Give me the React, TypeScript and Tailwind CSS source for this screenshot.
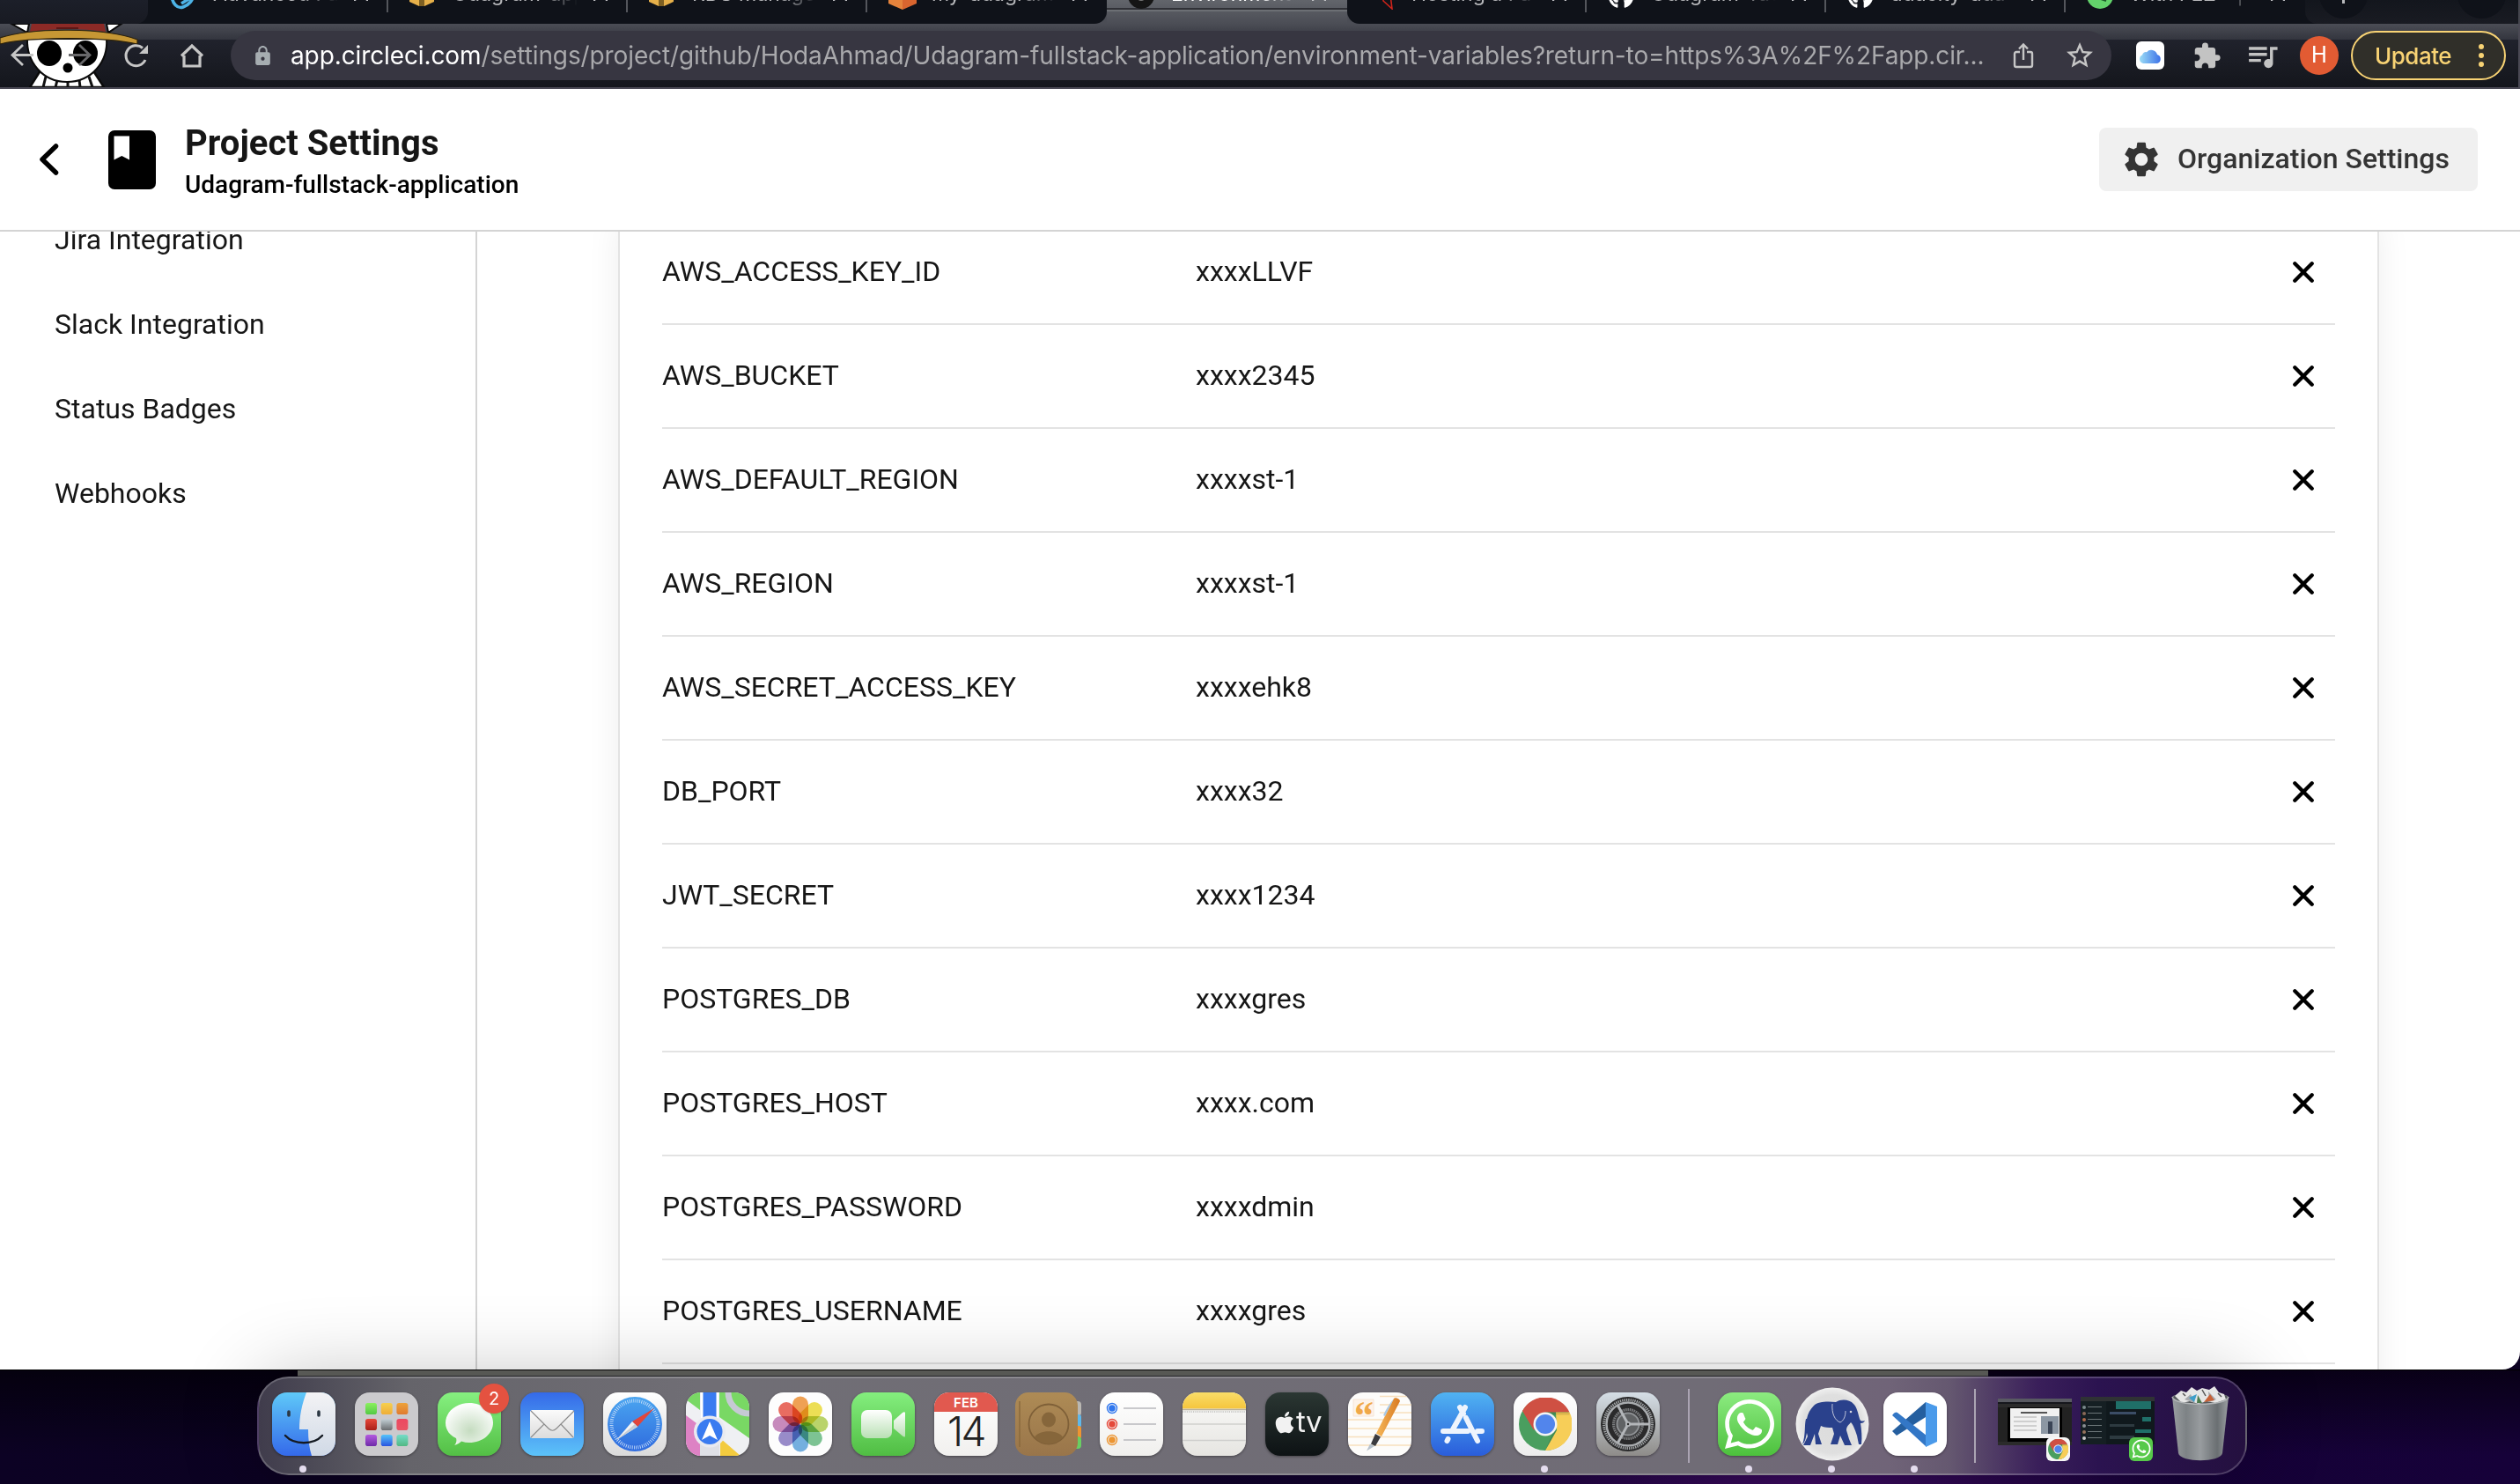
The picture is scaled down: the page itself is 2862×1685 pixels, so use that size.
import React from "react";
import { MdExtension, MdLock, MdQueueMusic, MdSettings, MdStarBorder } from "react-icons/md";
import { FaApple, FaGithub, FaWhatsapp } from "react-icons/fa";

const variables = [
  ["AWS_ACCESS_KEY_ID", "xxxxLLVF"],
  ["AWS_BUCKET", "xxxx2345"],
  ["AWS_DEFAULT_REGION", "xxxxst-1"],
  ["AWS_REGION", "xxxxst-1"],
  ["AWS_SECRET_ACCESS_KEY", "xxxxehk8"],
  ["DB_PORT", "xxxx32"],
  ["JWT_SECRET", "xxxx1234"],
  ["POSTGRES_DB", "xxxxgres"],
  ["POSTGRES_HOST", "xxxx.com"],
  ["POSTGRES_PASSWORD", "xxxxdmin"],
  ["POSTGRES_USERNAME", "xxxxgres"],
];

const Cube = ({ left, right, mid }: { left: string; right: string; mid: string }) => (
  <svg viewBox="0 0 28 28" className="size-7">
    <path d="M0 3h11v25L0 23z" fill={left} />
    <path d="M28 3H17v25l11-5z" fill={right} />
    <path d="M11 0h6v28h-6z" fill={mid} />
  </svg>
);

const tabs: { label: string; icon: React.ReactNode; active?: boolean }[] = [
  {
    label: "Advanced Fu",
    icon: (
      <svg viewBox="0 0 28 32" className="mt-1 h-8 w-7" fill="none" stroke="#4db3e6" strokeWidth="3.600">
        <path d="M2 14c0 12 7 17 13 15 6-2 12-8 12-16M13 25l13-8" />
      </svg>
    ),
  },
  { label: "Udagram-app", icon: <Cube left="#e6b04a" right="#e6b04a" mid="#7d5f22" /> },
  { label: "RDS Manage", icon: <Cube left="#e6b04a" right="#e6b04a" mid="#7d5f22" /> },
  {
    label: "my-udagram",
    icon: (
      <svg viewBox="0 0 32 32" className="mt-1 h-8 w-8">
        <path d="M0 6 16 0v32L0 25z" fill="#e5833c" />
        <path d="M32 6 16 0v32l16-7z" fill="#d9652f" />
      </svg>
    ),
  },
  {
    label: "Environment",
    active: true,
    icon: (
      <svg viewBox="0 0 30 30" className="mt-1 size-[30px]">
        <circle cx="15" cy="15" r="15" fill="#151515" />
        <circle cx="15" cy="15" r="6" fill="#777" />
      </svg>
    ),
  },
  {
    label: "Hosting a Fu",
    icon: (
      <svg viewBox="0 0 28 32" className="mt-1 h-8 w-7" fill="none" stroke="#d0241b" strokeWidth="1.600">
        <path d="M16 0 17 22l10 9-2-16" />
      </svg>
    ),
  },
  { label: "Udagram-Tac", icon: <FaGithub className="mt-1 size-[30px] text-white" /> },
  { label: "udacity-uda", icon: <FaGithub className="mt-1 size-[30px] text-white" /> },
  {
    label: "With FEZ - |",
    icon: (
      <svg viewBox="0 0 30 30" className="mt-1 size-[30px]">
        <circle cx="15" cy="15" r="15" fill="#63d36b" />
        <path d="m16 19 6 2" stroke="#1d5b2b" strokeWidth="2" />
      </svg>
    ),
  },
];

function TabStrip() {
  return (
    <div className="flex h-[27px] shrink-0 overflow-hidden bg-gradient-to-b from-[#5e6167] to-[#4b4d55]">
      <div className="flex flex-1 overflow-hidden bg-[#0f1219]">
        <div className="mr-px h-full w-[168px] shrink-0 rounded-br-[14px] bg-gradient-to-b from-[#1c1f29] to-[#181a22]" />
        {tabs.map((t, i) => (
          <div
            key={t.label}
            className={
              t.active
                ? "relative h-[27px] w-[273px] shrink-0 bg-gradient-to-b from-[#62656b] to-[#4b4d55]"
                : "relative h-[27px] w-[272px] shrink-0"
            }
          >
            {t.active && <div className="absolute inset-x-0 top-[9px] h-[2px] bg-[#303137]" />}
            {t.active && <div className="absolute inset-x-0 top-[11px] h-[2px] bg-[#6c6f74]" />}
            {t.active && (
              <>
                <div className="absolute bottom-0 -left-4 h-[27px] w-4 overflow-hidden bg-[#4b4d55]">
                  <div className="h-full w-full rounded-br-[14px] bg-[#0f1219]" />
                </div>
                <div className="absolute -right-4 bottom-0 z-10 h-[27px] w-4 overflow-hidden bg-[#4b4d55]">
                  <div className="h-full w-full rounded-bl-[14px] bg-[#0f1219]" />
                </div>
              </>
            )}
            <div className="relative -mt-[21px] flex h-7 items-center pl-6">
              <div className="flex w-[49px] shrink-0 items-center">{t.icon}</div>
              <div
                className={
                  t.active
                    ? "w-[142px] overflow-hidden whitespace-nowrap font-['Inter'] text-[23px] leading-7 text-white [mask-image:linear-gradient(to_right,black_70%,transparent)]"
                    : "w-[142px] overflow-hidden whitespace-nowrap font-['Inter'] text-[23px] leading-7 text-[#b8b9bc] [mask-image:linear-gradient(to_right,black_70%,transparent)]"
                }
              >
                {t.label}
              </div>
              <svg viewBox="0 0 16 16" className="ml-[18px] size-4" stroke="#c4c5c8" strokeWidth="2.400">
                <path d="m0 0 16 16M16 0 0 16" />
              </svg>
            </div>
            {!t.active && i !== 3 && i !== 8 && <div className="absolute top-0 right-0 h-[14px] w-[2px] bg-[#54565c]" />}
          </div>
        ))}
        <div className="flex flex-1 justify-between rounded-bl-[14px] bg-gradient-to-b from-[#13161d] to-[#191b22] pr-[14px] pl-4">
          <div className="-mt-[34px] flex size-[55px] items-end justify-center rounded-full bg-[#0f1219] pb-[17px]">
            <div className="h-5 w-[3px] bg-[#b8b9bc]" />
          </div>
          <div className="-mt-[34px] size-[55px] rounded-full bg-[#0f1219]" />
        </div>
      </div>
      <div className="w-[2px] bg-[#45464e]" />
    </div>
  );
}

function PirateSkull() {
  return (
    <svg viewBox="0 27 160 72" className="absolute top-0 left-0 h-[72px] w-[160px]">
      <path d="M13 27h20l-2 10zM121 27h17l-15 10z" fill="#fff" stroke="#0a0a0a" strokeWidth="2" />
      <path d="m46 80-12 19h84l-13-20z" fill="#fff" stroke="#0a0a0a" strokeWidth="2.500" />
      <path d="m52 87-3 12m16-8-2 8m14-8v8m13-8 1 8m10-12 4 12" stroke="#111" strokeWidth="3" />
      <path d="M31 44c-1 26 17 49 45 49s47-23 45-49z" fill="#fff" stroke="#0a0a0a" strokeWidth="2" />
      <ellipse cx="56" cy="60.500" rx="14" ry="14.500" fill="#000" />
      <ellipse cx="97" cy="60.500" rx="14" ry="14.500" fill="#000" />
      <circle cx="77" cy="77" r="5.500" fill="#000" />
      <path d="M36 27h82l2 9c-28-4-56-4-86 0z" fill="#8c2a26" />
      <path d="M64 32h25" stroke="#5c1715" strokeWidth="2" />
      <path d="M20 45c30-5 84-5 114 0" stroke="#15110a" strokeWidth="3" fill="none" />
      <path d="M0 43C36 31 120 31 156 45v5C120 42 40 41 0 50z" fill="#c69734" stroke="#2c220c" strokeWidth="1.200" />
    </svg>
  );
}

function Toolbar() {
  return (
    <div className="relative flex h-[74px] shrink-0 items-center border-r-2 border-b-2 border-[#4a4954] bg-[linear-gradient(to_bottom,#4b4d55_0px,#33353e_18px,#20222c_18px,#14161c_72px)]">
      <PirateSkull />
      <svg viewBox="0 0 262 72" className="relative h-[72px] w-[262px] shrink-0" fill="none" stroke="#c6c6c6" strokeWidth="2.800">
        <path d="M38 35.500H14M26 24 14 35.500 26 47" />
        <path d="M78 35.500h24M90 24l12 11.500L90 47" stroke="#68686a" />
        <path d="M165 41a11.500 11.500 0 1 1-3-13.500" strokeWidth="3" />
        <path d="m168 24v10h-10z" fill="#c6c6c6" stroke="none" />
        <path d="M209 36v12h18V36" strokeWidth="3.200" />
        <path d="M206 36.500 218 25l12 11.500" strokeWidth="3.200" />
      </svg>
      <div className="flex h-14 w-[2136px] shrink-0 items-center rounded-full bg-[#373641] pl-[24px]">
        <MdLock className="mr-[19px] size-[25px] shrink-0 text-[#a6adb1]" />
        <div className="w-[1934px] shrink-0 whitespace-nowrap font-['Inter'] text-[28px] tracking-[-0.110px] text-[#a9a9ac]">
          <span className="text-white">app.circleci.com</span>
          /settings/project/github/HodaAhmad/Udagram-fullstack-application/environment-variables?return-to=https%3A%2F%2Fapp.cir...
        </div>
        <svg viewBox="0 0 24 30" className="ml-[22px] h-[30px] w-6 shrink-0" fill="none" stroke="#c6c6c6" strokeWidth="2.400">
          <path d="M8 11H4a2 2 0 0 0-2 2v13a2 2 0 0 0 2 2h16a2 2 0 0 0 2-2V13a2 2 0 0 0-2-2h-4M12 20V2.500M7 7.500l5-5 5 5" />
        </svg>
        <MdStarBorder className="ml-[34px] size-[36px] shrink-0 text-[#c6c6c6]" />
      </div>
      <div className="ml-[28px] flex size-8 items-center justify-center rounded-[6px] bg-white">
        <svg viewBox="0 0 26 17" className="h-[17px] w-[26px]">
          <defs>
            <linearGradient id="cloud">
              <stop offset="0" stopColor="#9bdcf6" />
              <stop offset="1" stopColor="#3d72e8" />
            </linearGradient>
          </defs>
          <path d="M5 17a5 5 0 0 1-1-9.500 4 4 0 0 1 5-3.300A7 7 0 0 1 21 7a5.200 5.200 0 0 1 0 10z" fill="url(#cloud)" />
        </svg>
      </div>
      <MdExtension className="ml-[32px] size-[33px] text-[#c3c3c3]" />
      <MdQueueMusic className="ml-[26px] size-[41px] text-[#c3c3c3]" />
      <div className="ml-[22px] flex size-11 items-center justify-center rounded-full bg-[#e25b33] font-['Roboto'] text-[25px] text-white">H</div>
      <div className="ml-[14px] flex h-14 w-[176px] items-center rounded-full border-2 border-[#f8d374] bg-[#302f29] pl-[25px] font-['Inter'] text-[26px] font-medium tracking-[-0.500px] text-[#f8d374]">
        <span className="w-[110px]">Update</span>
        <div className="ml-[8px] flex flex-col gap-1">
          <i className="size-[6px] rounded-full bg-[#f8d374]" />
          <i className="size-[6px] rounded-full bg-[#f8d374]" />
          <i className="size-[6px] rounded-full bg-[#f8d374]" />
        </div>
      </div>
    </div>
  );
}

function Header() {
  return (
    <div className="flex h-[162px] shrink-0 items-center border-b-2 border-[#d4d4d4] bg-white pr-[48px] pl-[44px]">
      <svg viewBox="0 0 23 36" className="h-9 w-[23px]" fill="none" stroke="#000" strokeWidth="5.500" strokeLinecap="round" strokeLinejoin="round">
        <path d="M19.500 3 4 18l15.500 15" />
      </svg>
      <svg viewBox="0 0 54 67" className="ml-[56px] h-[67px] w-[54px]">
        <rect width="54" height="67" rx="7" />
        <path d="M6.500 6.500H24v27L15.300 29 6.500 33.500z" fill="#fff" />
      </svg>
      <div className="ml-[33px] flex flex-col pt-[6px]">
        <div className="text-[40px] leading-[48px] font-bold text-[#161616]">Project Settings</div>
        <div className="mt-[3px] text-[28px] leading-[40px] font-medium text-black">Udagram-fullstack-application</div>
      </div>
      <div className="ml-auto flex h-[72px] w-[430px] items-center rounded-lg bg-[#f0f0f0] pl-6 text-[32px] font-medium text-[#343434]">
        <MdSettings className="mr-[17px] size-12" />
        <span className="-mt-[2px]">Organization Settings</span>
      </div>
    </div>
  );
}

function Content() {
  return (
    <div className="flex h-[1292px] shrink-0 overflow-hidden rounded-br-[20px] bg-white text-[32px] text-[#161616]">
      <div className="w-[542px] shrink-0 border-r-2 border-[#d4d4d4] pl-[62px]">
        <div className="-mt-[39px] flex flex-col">
          {["Jira Integration", "Slack Integration", "Status Badges", "Webhooks"].map((l) => (
            <div key={l} className="flex h-24 items-center">
              {l}
            </div>
          ))}
        </div>
      </div>
      <div className="-mt-[12px] ml-[160px] h-[1400px] w-[2000px] border-x-2 border-[#e3e3e3] px-12 shadow-[0_0_36px_rgba(0,0,0,0.07)]">
        {variables.map(([name, value]) => (
          <div key={name} className="flex h-[118px] items-center border-b-2 border-[#e3e3e3]">
            <div className="w-[606px] pb-[2px]">{name}</div>
            <div className="flex-1 pb-[2px]">{value}</div>
            <svg viewBox="0 0 24 24" className="mr-6 size-6" stroke="#000" strokeWidth="4.300" strokeLinecap="round">
              <path d="m2.300 2.300 19.400 19.400M21.700 2.300 2.300 21.700" />
            </svg>
          </div>
        ))}
      </div>
    </div>
  );
}

const Grad = ({ id, from, to }: { id: string; from: string; to: string }) => (
  <linearGradient id={id} x1="0" y1="0" x2="0" y2="1">
    <stop offset="0" stopColor={from} />
    <stop offset="1" stopColor={to} />
  </linearGradient>
);

const ChromeMark = ({ className }: { className: string }) => (
  <svg viewBox="-30 -30 60 60" className={className}>
    <circle r="30" fill="#4a9e5f" />
    <path d="M-26 -15A30 30 0 0 1 27.500 -13.500H0L-13 7z" fill="#cf5043" />
    <path d="M27.500 -13.500A30 30 0 0 1 0 30L13 7 12 -13.500z" fill="#f7ce58" />
    <path d="M0-13.500h27.500v3H4zM0 30 13 7l-3-1z" fill="#000" opacity=".12" />
    <circle r="13.500" fill="#f4f4f4" />
    <circle r="11" fill="#5285ec" />
  </svg>
);

const Finder = () => (
  <svg viewBox="0 0 72 72">
    <defs>
      <Grad id="fa" from="#5fc9f8" to="#3469ea" />
      <Grad id="fb" from="#f3f3f5" to="#d0d9e6" />
    </defs>
    <rect width="72" height="72" fill="url(#fa)" />
    <path d="M39 0c-5 13-8 27-8 42h10c0 11 1 21 4 30h27V0z" fill="url(#fb)" />
    <path d="M19 22v4M53 22v4" stroke="#2c3844" strokeWidth="3.600" strokeLinecap="round" />
    <path d="M15 49c10 11 32 11 42 0" stroke="#151a22" strokeWidth="2.400" strokeLinecap="round" fill="none" />
  </svg>
);

const launchColors = [
  ["#8bf05e", "#54c945"],
  ["#f6cf4f", "#efae38"],
  ["#eda23a", "#e07b30"],
  ["#e8483a", "#a81f18"],
  ["#c4d0d6", "#6a6d70"],
  ["#ec4861", "#e95565"],
  ["#b45be0", "#6f2ba8"],
  ["#54c4fa", "#2a54e0"],
  ["#74dcc8", "#52b883"],
];
const Launchpad = () => (
  <svg viewBox="0 0 72 72">
    <rect width="72" height="72" fill="#cbcacd" />
    {launchColors.map(([a, b], i) => (
      <g key={a}>
        <defs>
          <Grad id={`lp${i}`} from={a} to={b} />
        </defs>
        <rect x={12 + (i % 3) * 17.7} y={12 + Math.floor(i / 3) * 18} width="13" height="13" rx="2.800" fill={`url(#lp${i})`} />
      </g>
    ))}
  </svg>
);

const Messages = () => (
  <svg viewBox="0 0 72 72">
    <defs>
      <Grad id="ma" from="#86f080" to="#53bf45" />
      <radialGradient id="mb" cx=".52" cy=".65" r=".6">
        <stop offset="0" stopColor="#c5dcc0" />
        <stop offset="1" stopColor="#fbfdfb" />
      </radialGradient>
    </defs>
    <rect width="72" height="72" fill="url(#ma)" />
    <path d="M36 12c15 0 27 10 27 22.500S51 57 36 57c-3 0-6-.5-9-1.500-2 2-5 4-8 4.500 2-2 3-5 2-8C13 48 9 42 9 34.500 9 22 21 12 36 12z" fill="url(#mb)" />
  </svg>
);

const Mail = () => (
  <svg viewBox="0 0 72 72">
    <defs>
      <Grad id="mc" from="#356ae8" to="#5cc3f9" />
      <Grad id="md" from="#fbfbfb" to="#dcdcdc" />
    </defs>
    <rect width="72" height="72" fill="url(#mc)" />
    <rect x="11" y="20" width="50" height="32" rx="2.500" fill="url(#md)" />
    <path d="m12 21 20 20c3 3 6 3 9 0l20-20M12 51l15-15M60 51 46 36" stroke="#8b8b8b" strokeWidth="1.100" fill="none" />
  </svg>
);

const Safari = () => (
  <svg viewBox="0 0 72 72">
    <defs>
      <Grad id="sa" from="#ffffff" to="#dadada" />
      <Grad id="sb" from="#4aa5f0" to="#2f6bde" />
    </defs>
    <rect width="72" height="72" fill="url(#sa)" />
    <circle cx="36" cy="36" r="31" fill="url(#sb)" />
    <circle cx="36" cy="36" r="26.500" fill="none" stroke="#cfe3fa" strokeWidth="4" strokeDasharray="0.8 1.510" />
    <path d="M58 18 39 39l-6-6z" fill="#e0463c" />
    <path d="m15 54 18-21 6 6z" fill="#f2f2f2" />
    <path d="m15 54 24-15-3-3z" fill="#c6ccd4" />
  </svg>
);

const Maps = () => (
  <svg viewBox="0 0 72 72">
    <rect width="72" height="72" fill="#eff0f3" />
    <path d="M0 0h16v20L0 8zM38 0h34v52L38 28z" fill="#79d864" />
    <path d="M0 26 16 38v34H0z" fill="#dd82c4" />
    <path d="M39 52 62 72H39z" fill="#f3cb3f" />
    <path d="M16 40h22v32H16z" fill="#dfe0e6" />
    <path d="M17 0h20v34H17z" fill="#fff" />
    <path d="M19.500 0h15v34h-15z" fill="#3a7bf0" />
    <circle cx="72" cy="0" r="24" fill="none" stroke="#c6c9d4" strokeWidth="7" />
    <circle cx="27" cy="44.500" r="18" fill="#e9eaf0" />
    <circle cx="27" cy="44.500" r="14.500" fill="#3a7bf0" />
    <path d="m27 33 9 21-9-5-9 5z" fill="#fff" />
  </svg>
);

const petals = ["#f0953c", "#ecdc3d", "#b2cf56", "#6cbd85", "#62a6dd", "#8b7cc4", "#c27bb5", "#e8594c"];
const Photos = () => (
  <svg viewBox="0 0 72 72">
    <rect width="72" height="72" fill="#fdfdfd" />
    {petals.map((c, i) => (
      <rect key={c} x="27" y="4.500" width="18" height="31" rx="9" fill={c} opacity=".88" transform={`rotate(${i * 45} 36 36)`} className="mix-blend-multiply" />
    ))}
  </svg>
);

const FaceTime = () => (
  <svg viewBox="0 0 72 72">
    <defs>
      <Grad id="fc" from="#84ee7e" to="#50bd43" />
      <Grad id="fd" from="#ffffff" to="#b9e0b4" />
    </defs>
    <rect width="72" height="72" fill="url(#fc)" />
    <rect x="11" y="20" width="35" height="32" rx="7" fill="url(#fd)" />
    <path d="M48 32 58 23c2-1.500 3-1 3 1v25c0 2-1 2-3 .5L48 41z" fill="url(#fd)" />
  </svg>
);

const Calendar = () => (
  <div className="flex size-full flex-col items-center bg-gradient-to-b from-white to-[#f1f0ee]">
    <div className="flex h-[22px] w-full shrink-0 items-center justify-center bg-[#e1594f] pt-[2px] font-['Inter'] text-[15px] leading-none font-semibold text-white [text-shadow:none]">FEB</div>
    <div className="-mt-px font-['Inter'] text-[46px] leading-[46px] font-light tracking-[-2.500px] text-[#222]">14</div>
  </div>
);

const Contacts = () => (
  <svg viewBox="0 0 76 72" className="h-[72px] w-[76px]">
    <defs>
      <Grad id="ca" from="#ae8b55" to="#99754a" />
    </defs>
    <rect x="62" y="10" width="13" height="17" rx="4" fill="#b9b7b2" />
    <rect x="62" y="25" width="13" height="15" rx="3" fill="#5fb8ea" />
    <rect x="62" y="38" width="13" height="15" rx="3" fill="#ee9431" />
    <rect x="62" y="50" width="13" height="14" rx="4" fill="#69cf62" />
    <rect x="0" y="0" width="71" height="72" rx="15" fill="url(#ca)" />
    <path d="M5 10v52" stroke="#8a6a3d" strokeWidth="1.500" />
    <circle cx="38" cy="36" r="22.500" fill="none" stroke="#7f6038" strokeWidth="1.800" />
    <ellipse cx="38" cy="31" rx="8" ry="8.500" fill="#86663b" />
    <path d="M22 51c4-9 28-9 32 0-8 10-24 10-32 0z" fill="#86663b" />
  </svg>
);

const Reminders = () => (
  <svg viewBox="0 0 72 72">
    <defs>
      <Grad id="ra" from="#ffffff" to="#f0efed" />
    </defs>
    <rect width="72" height="72" fill="url(#ra)" />
    {["#2f76ee", "#e5493a", "#ec9532"].map((c, i) => (
      <g key={c}>
        <circle cx="14" cy={18 + i * 18} r="5.500" fill="none" stroke={c} strokeWidth="1.400" />
        <circle cx="14" cy={18 + i * 18} r="3.800" fill={c} />
        <path d={`M27 ${18 + i * 18}h37`} stroke="#b9b9bd" strokeWidth="1.700" />
      </g>
    ))}
  </svg>
);

const Notes = () => (
  <svg viewBox="0 0 72 72">
    <defs>
      <Grad id="na" from="#f9dd68" to="#f5c53d" />
      <Grad id="nb" from="#fbfbfa" to="#e6e5e1" />
    </defs>
    <rect width="72" height="72" fill="url(#nb)" />
    <rect width="72" height="18.500" fill="url(#na)" />
    <path d="M0 19.500h72" stroke="#b9b19b" strokeWidth="1.500" />
    <path d="M0 22h72" stroke="#bdbdbb" strokeWidth="1.500" strokeDasharray="1.200 1.200" />
    <path d="M0 36h72M0 54.500h72" stroke="#cfcfcd" strokeWidth="1.400" />
  </svg>
);

const AppleTv = () => (
  <div className="flex size-full items-center justify-center bg-gradient-to-b from-[#2b3733] to-[#0d1214] font-['Inter'] text-[33px] text-[#f2f2f2]">
    <FaApple className="-mt-1 -mr-px size-[28px]" />
    <span className="-mt-1 tracking-[-0.500px]">tv</span>
  </div>
);

const Pages = () => (
  <svg viewBox="0 0 72 72">
    <defs>
      <linearGradient id="pa">
        <stop offset="0" stopColor="#f6b85a" />
        <stop offset="1" stopColor="#d87a22" />
      </linearGradient>
    </defs>
    <rect width="72" height="72" fill="#fdfcfa" />
    <path d="M36 4.500h36M36 14h36M36 23h36M0 31h72M0 41h72M0 50.500h72M0 60h72" stroke="#f8dfbd" strokeWidth="1.300" />
    <path d="M6 8h23v19H6z" fill="#fdf3ea" stroke="#f4e0cf" strokeWidth=".8" />
    <text x="7" y="42" fontFamily="Liberation Serif" fontWeight="bold" fontSize="46" textLength="22" lengthAdjust="spacingAndGlyphs" fill="#f0a848">“</text>
    <path d="M52 7c1-2 7 0 7 3L38 50l-6-3.500z" fill="url(#pa)" />
    <path d="m52 7c-5 6-9 12-12 19l2 1z" fill="#a8c8e4" />
    <path d="m31 47 6 3.500L31 61l-5-2.500z" fill="#3b3b3f" />
    <path d="m25 58.500 5 2.500-9 5.500z" fill="#b7c2cc" />
  </svg>
);

const AppStore = () => (
  <svg viewBox="0 0 72 72">
    <defs>
      <Grad id="aa" from="#50b3f2" to="#2a5ddb" />
    </defs>
    <rect width="72" height="72" fill="url(#aa)" />
    <g stroke="#eef4fd" strokeWidth="6" strokeLinecap="round">
      <path d="M39 17 25 42M14 44h28M53 44h5M18.500 55l1-2M33 17l4 7M40 29l13 26" />
    </g>
  </svg>
);

const ChromeApp = () => (
  <div className="flex size-full items-center justify-center bg-gradient-to-b from-white to-[#ececec]">
    <ChromeMark className="size-[60px]" />
  </div>
);

const Prefs = () => (
  <svg viewBox="0 0 72 72">
    <defs>
      <Grad id="ya" from="#d5dee6" to="#8e8c89" />
    </defs>
    <rect width="72" height="72" fill="url(#ya)" />
    <circle cx="36" cy="36" r="31" fill="#2a2a2b" />
    <circle cx="36" cy="36" r="27.500" fill="none" stroke="#a0a3a5" strokeWidth="3" strokeDasharray="1.400 1" />
    <circle cx="36" cy="36" r="24.500" fill="none" stroke="#a9acaf" strokeWidth="2.500" />
    <circle cx="36" cy="36" r="18" fill="#3a3a3c" />
    <circle cx="36" cy="36" r="16.500" fill="none" stroke="#7d7f81" strokeWidth="3" strokeDasharray="1.400 1" />
    <circle cx="36" cy="36" r="12.500" fill="#606264" stroke="#8d9093" strokeWidth="2" />
    <path d="M36 36h24M36 36 24.500 15M36 36 24.500 57" stroke="#b3b6b9" strokeWidth="3" />
    <circle cx="36" cy="36" r="3" fill="#b3b6b9" />
    <circle cx="36" cy="36" r="1.200" fill="#333" />
  </svg>
);

const WhatsAppIcon = () => (
  <div className="flex size-full items-center justify-center bg-gradient-to-b from-[#8ceb80] to-[#4cc13c]">
    <FaWhatsapp className="size-[64px] text-white" />
  </div>
);

const VsCode = () => (
  <svg viewBox="0 0 72 72">
    <rect width="72" height="72" fill="#fff" />
    <path d="M10 44 48 11v17L15 49z" fill="#255f9f" />
    <path d="M10 26q3-5 6-3l33 26v13z" fill="#3377c6" />
    <path d="M48 11 61 16v40l-13 6z" fill="#4a9aea" />
  </svg>
);

const Elephant = () => (
  <svg viewBox="0 0 84 84" className="size-[84px]">
    <defs>
      <radialGradient id="ea">
        <stop offset="0" stopColor="#dcdcdc" />
        <stop offset=".8" stopColor="#dfdfdf" />
        <stop offset="1" stopColor="#f0f0f0" />
      </radialGradient>
    </defs>
    <circle cx="42" cy="42" r="41.500" fill="url(#ea)" />
    <path
      d="M12 36C10 44 12 54 8 65c3-2 4-8 5-13l1 4-5 10h8l5-13 1 12h7l-4-12 3-9c4 2 9 2 13 2l2 7-4 12h8l3-10 5 11h8l-3-7-3-10c0-5 3-6 5-9 3 3 5 9 7 15l2 10h3c1-8 0-17-1-24 3 0 4-1 5-3-3 1-5 1-6-2-2-7-3-13-7-17-4-5-14-6-20-2-9-1-20-1-25 4-4 4-7 9-8 15z"
      fill="#2a418c"
    />
    <path d="M42 19c-1 11 3 19 9 21 4-2 6-7 6-13" fill="none" stroke="#d0d4e2" strokeWidth=".9" />
    <circle cx="63" cy="28" r="1.300" fill="#d8d8e0" />
  </svg>
);

const Trash = () => (
  <svg viewBox="0 0 66 86" className="h-[86px] w-[66px]">
    <defs>
      <linearGradient id="ta">
        <stop offset="0" stopColor="#9a9ea1" />
        <stop offset=".25" stopColor="#7d8285" />
        <stop offset=".5" stopColor="#989c9f" />
        <stop offset=".8" stopColor="#6a6f72" />
        <stop offset="1" stopColor="#9ca0a3" />
      </linearGradient>
    </defs>
    <path d="M1 12c12-8 52-8 64 0l-7 64c-2 11-48 11-50 0z" fill="url(#ta)" />
    <ellipse cx="33" cy="13" rx="31" ry="7" fill="#565a5d" />
    <path d="m4 11 7-6 6 2 6-6 6 4 6-3 8 2 6-4 5 7 6 2 2 6-12 4-10-2-9 3-10-3-9 2z" fill="#e6e6e6" />
    <path d="m15 15 7-6 5 10zM42 6l9 9-8 3z" fill="#a6a8ac" />
    <path d="m20 13 9-4-3 9z" fill="#3f9fc9" />
    <path d="m37 18 7-9 5 7z" fill="#c76238" />
    <path d="m30 10 5 9h-6z" fill="#4a7a4d" />
    <path d="M13 8l3 3M35 4l4 7M53 8l4 4" stroke="#555" strokeWidth="1.500" />
    <path d="M1 12c2 11 62 11 64 0" fill="none" stroke="#b1b4b6" strokeWidth="1.500" />
  </svg>
);

const BrowserThumb = () => (
  <div className="relative h-[58px] w-[84px]">
    <div className="flex h-[53px] flex-col bg-[#2b2b2b]">
      <div className="h-1 bg-[#595a62]" />
      <div className="h-[2px] bg-[#16171d]" />
      <div className="mt-1 flex h-[39px] justify-center bg-[#222]">
        <div className="flex h-full w-[62px] bg-black px-[3px] py-[1px]">
          <div className="flex h-[34px] w-full flex-col bg-[#f1f1f1] pt-1 pl-1">
            <div className="ml-2 h-[2px] w-[30px] bg-[#555]" />
            <div className="mt-[3px] flex justify-between pr-px">
              <div className="flex w-[26px] flex-col gap-[3px]">
                {[0, 1, 2, 3].map((i) => (
                  <div key={i} className="h-[2px] bg-[#cfcfcf]" />
                ))}
              </div>
              <div className="flex h-5 w-[20px] items-end justify-center bg-[#8c97a3] px-1">
                <div className="h-[14px] w-[5px] bg-[#3b4556]" />
              </div>
            </div>
          </div>
        </div>
      </div>
    </div>
    <div className="absolute right-[2px] -bottom-[13px] flex size-[27px] items-center justify-center rounded-[6px] bg-[#f6f6f6]">
      <ChromeMark className="size-[23px]" />
    </div>
  </div>
);

const ChatThumb = () => (
  <div className="relative h-[58px] w-[84px]">
    <div className="-mt-[2px] flex h-[54px] flex-col bg-[#10191d]">
      <div className="h-[5px] bg-[#2f3234]" />
      <div className="flex flex-1">
        <div className="flex w-[29px] flex-col gap-[3px] bg-[#151f23] pt-[5px] pl-[2px]">
          {["#7a8a8c", "#8b6a58", "#b06a4a", "#8a8f92", "#94735c", "#c9c9c9"].map((c) => (
            <div key={c} className="flex items-center gap-[2px]">
              <i className="size-1 rounded-full" style={{ backgroundColor: c }} />
              <i className="h-px w-4 bg-[#6c7678]" />
            </div>
          ))}
        </div>
        <div className="flex flex-1 flex-col gap-[3px] px-1">
          <div className="ml-auto h-[9px] w-[40px] bg-[#1f6f68]" />
          <div className="h-[3px] w-[30px] bg-[#3b4d66]" />
          <div className="ml-auto h-[5px] w-[10px] bg-[#1f6f68]" />
          <div className="h-[3px] w-[28px] bg-[#2d3a40]" />
          <div className="ml-auto h-1 w-[18px] bg-[#1f6f68]" />
          <div className="h-[4px] w-[28px] bg-[#2d3a40]" />
        </div>
      </div>
    </div>
    <div className="absolute right-[2px] -bottom-[13px] flex size-[27px] items-center justify-center rounded-[6px] bg-[#57c94a]">
      <FaWhatsapp className="size-[24px] text-white" />
    </div>
  </div>
);

function Slot({ children, bare, dot, badge }: { children: React.ReactNode; bare?: boolean; dot?: boolean; badge?: string }) {
  return (
    <div className="relative flex h-[106px] w-[94px] shrink-0 items-center justify-center pb-[5px]">
      {bare ? children : <div className="size-[72px] overflow-hidden rounded-[17px] shadow-[0_1px_3px_rgba(0,0,0,0.4)]">{children}</div>}
      {dot && <i className="absolute bottom-0 left-[42px] size-2 rounded-full bg-[#e4dcee]" />}
      {badge && (
        <div className="absolute top-[5px] right-[2px] flex size-[34px] items-center justify-center rounded-full bg-[#e45240] font-['Inter'] text-[20px] text-white shadow">
          {badge}
        </div>
      )}
    </div>
  );
}

const Divider = ({ narrow }: { narrow?: boolean }) => (
  <div className={narrow ? "flex w-[42px] shrink-0 justify-center" : "flex w-[44px] shrink-0 justify-center"}>
    <div className="h-[84px] w-[2px] bg-[#aba4b3]" />
  </div>
);

function Desktop() {
  return (
    <div className="relative h-[130px] shrink-0 border-t border-black bg-[radial-gradient(ellipse_420px_60px_at_2060px_130px,#3d0b60,transparent),linear-gradient(to_bottom,rgba(0,0,0,0.6),transparent_75%),linear-gradient(to_right,#0c0224,#0a021c_30%,#140334_60%,#160139)]">
      <div className="ml-[338px] h-[7px] w-[1920px] border-b border-[#2c2c2f] bg-[#62635f]" />
      <div className="ml-[292px] flex h-[112px] w-[2260px] items-center rounded-[36px] border-2 border-white/20 bg-[linear-gradient(to_right,#403c4c_0px,#4c4a56_60px,#65646a_170px,#706e75_500px,#706c76_1650px,#706478_1850px,#655870_1920px,#3a1f5a_2020px,#2b1350_2090px,#24103f_2260px)] pl-1 shadow-[0_0_90px_rgba(0,0,0,0.24)]">
        <Slot dot><Finder /></Slot>
        <Slot><Launchpad /></Slot>
        <Slot badge="2"><Messages /></Slot>
        <Slot><Mail /></Slot>
        <Slot><Safari /></Slot>
        <Slot><Maps /></Slot>
        <Slot><Photos /></Slot>
        <Slot><FaceTime /></Slot>
        <Slot><Calendar /></Slot>
        <Slot bare><Contacts /></Slot>
        <Slot><Reminders /></Slot>
        <Slot><Notes /></Slot>
        <Slot><AppleTv /></Slot>
        <Slot><Pages /></Slot>
        <Slot><AppStore /></Slot>
        <Slot dot><ChromeApp /></Slot>
        <Slot><Prefs /></Slot>
        <Divider />
        <Slot dot><WhatsAppIcon /></Slot>
        <Slot bare dot><Elephant /></Slot>
        <Slot dot><VsCode /></Slot>
        <Divider narrow />
        <Slot bare><BrowserThumb /></Slot>
        <Slot bare><ChatThumb /></Slot>
        <Slot bare><Trash /></Slot>
      </div>
    </div>
  );
}

export default function App() {
  return (
    <div className="flex h-[1685px] w-[2862px] flex-col overflow-hidden bg-[#0d0222] font-['Roboto',sans-serif]">
      <TabStrip />
      <Toolbar />
      <Header />
      <Content />
      <Desktop />
    </div>
  );
}
